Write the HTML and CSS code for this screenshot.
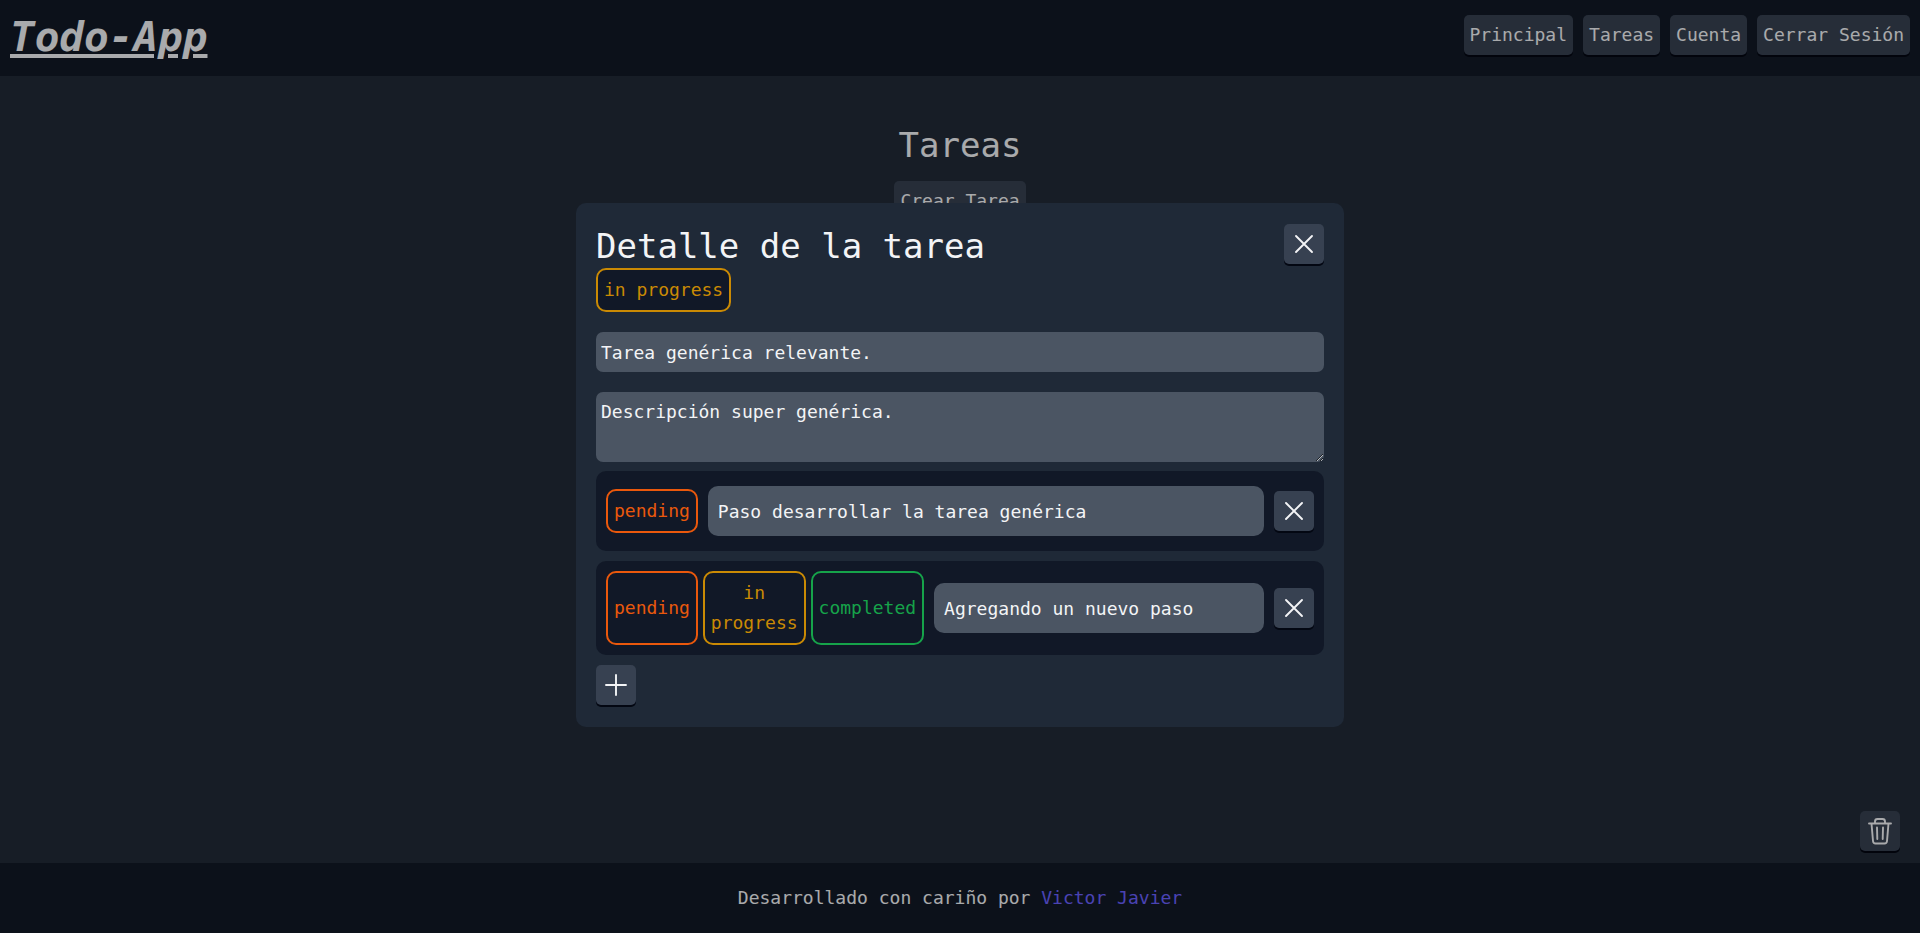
FILE: index.html
```html
<!DOCTYPE html>
<html lang="es">
<head>
  <meta charset="utf-8">
  <meta name="viewport" content="width=device-width, initial-scale=1">
  <title>Todo-App</title>
  <link rel="stylesheet" href="styles.css">
</head>
<body>
  <header class="header">
    <a class="logo" href="#">Todo-App</a>
    <nav class="nav">
      <a class="button" href="#">Principal</a>
      <a class="button" href="#">Tareas</a>
      <a class="button" href="#">Cuenta</a>
      <a class="button" href="#">Cerrar Sesión</a>
    </nav>
  </header>

  <main class="main">
    <h1 class="title">Tareas</h1>
    <button class="button" type="button">Crear Tarea</button>
    <button class="button icon-button trash" type="button" aria-label="Eliminar">
      <svg class="icon" viewBox="0 0 30 30" aria-hidden="true">
        <path d="M4 7.500H26M6.500 7.500L8 25Q8.200 27.500 10.500 27.500H19.500Q21.800 27.500 22 25L23.500 7.500M10 7V5.500Q10 3 12.500 3H17.500Q20 3 20 5.500V7M12 11.500L12.300 23M18 11.500L17.700 23"/>
      </svg>
    </button>
  </main>

  <footer class="footer">
    <p class="credit">Desarrollado con cariño por <a class="link" href="#">Victor Javier</a></p>
  </footer>

  <div class="overlay">
    <section class="modal" role="dialog" aria-modal="true" aria-labelledby="modal-title">
      <div class="modal-head">
        <h2 class="title" id="modal-title">Detalle de la tarea</h2>
        <button class="button icon-button" type="button" aria-label="Cerrar">
          <svg class="icon" viewBox="0 0 30 30" aria-hidden="true"><path d="M7 7L23 23M23 7L7 23"/></svg>
        </button>
      </div>
      <button class="badge badge-progress" type="button">in progress</button>
      <form class="form">
        <input class="field" type="text" aria-label="Título" value="Tarea genérica relevante.">
        <textarea class="field area" rows="2" aria-label="Descripción">Descripción super genérica.</textarea>
      </form>
      <ul class="steps">
        <li class="step">
          <div class="badges">
            <button class="badge badge-pending" type="button">pending</button>
          </div>
          <input class="field step-field" type="text" aria-label="Paso 1" value="Paso desarrollar la tarea genérica">
          <button class="button icon-button" type="button" aria-label="Eliminar paso 1">
            <svg class="icon" viewBox="0 0 30 30" aria-hidden="true"><path d="M7 7L23 23M23 7L7 23"/></svg>
          </button>
        </li>
        <li class="step">
          <div class="badges">
            <button class="badge badge-pending" type="button">pending</button>
            <button class="badge badge-progress" type="button">in progress</button>
            <button class="badge badge-completed" type="button">completed</button>
          </div>
          <input class="field step-field" type="text" aria-label="Paso 2" value="Agregando un nuevo paso">
          <button class="button icon-button" type="button" aria-label="Eliminar paso 2">
            <svg class="icon" viewBox="0 0 30 30" aria-hidden="true"><path d="M7 7L23 23M23 7L7 23"/></svg>
          </button>
        </li>
      </ul>
      <button class="button icon-button" type="button" aria-label="Agregar paso">
        <svg class="icon" viewBox="0 0 30 30" aria-hidden="true"><path d="M5 15H25M15 5V25"/></svg>
      </button>
    </section>
  </div>
</body>
</html>
```
FILE: styles.css
```css
* {
  box-sizing: border-box;
}

body {
  display: flex;
  flex-direction: column;
  min-height: 100vh;
  margin: 0;
  background: #212a37;
  color: #f3f4f6;
  font: 18px/30px "DejaVu Sans Mono", monospace;
}

button,
input,
textarea {
  margin: 0;
  border: 0;
  color: inherit;
  font: inherit;
}

.header {
  display: flex;
  justify-content: space-between;
  align-items: flex-start;
  padding: 12px 10px 14px;
  background: #121926;
}

.logo {
  color: inherit;
  font-size: 41px;
  font-style: italic;
  font-weight: bold;
  line-height: 50px;
  text-decoration: underline;
}

.nav {
  display: flex;
  gap: 10px;
  padding-top: 3px;
}

.button {
  padding: 5px 6px;
  border-radius: 5px;
  background: #374151;
  box-shadow: 0 2px 0 #030712;
  color: inherit;
  text-decoration: none;
}

.icon-button {
  flex: none;
  display: block;
  width: 40px;
  height: 40px;
  padding: 5px;
}

.icon {
  display: block;
  width: 30px;
  height: 30px;
  fill: none;
  stroke: currentColor;
  stroke-width: 1.9;
  stroke-linecap: round;
  stroke-linejoin: round;
}

.main {
  position: relative;
  flex: 1;
  display: flex;
  flex-direction: column;
  align-items: center;
  gap: 14px;
  padding-top: 47px;
}

.title {
  margin: 0;
  font-size: 34px;
  font-weight: normal;
  line-height: 44px;
}

.trash {
  position: absolute;
  right: 20px;
  bottom: 12px;
}

.footer {
  padding: 20px;
  background: #121926;
  text-align: center;
}

.credit {
  margin: 0;
}

.link {
  color: #6a60ff;
  text-decoration: none;
}

.overlay {
  position: fixed;
  inset: 0;
  display: flex;
  align-items: center;
  justify-content: center;
  padding-bottom: 3px;
  background: rgba(0, 0, 0, 0.3);
}

.modal {
  width: 40%;
  padding: 21px 20px 22px;
  border-radius: 10px;
  background: #1f2937;
}

.modal-head {
  display: flex;
  justify-content: space-between;
}

.badge {
  padding: 5px 6px;
  border: 2px solid;
  border-radius: 10px;
  background: #111827;
}

.badge-pending {
  color: #ea580c;
}

.badge-progress {
  color: #ca8a04;
}

.badge-completed {
  color: #16a34a;
}

.form {
  display: flex;
  flex-direction: column;
  gap: 20px;
  padding: 20px 0 9px;
}

.field {
  width: 100%;
  height: 40px;
  padding: 5px;
  border-radius: 7px;
  background: #4b5563;
}

.area {
  display: block;
  height: 70px;
  resize: vertical;
}

.steps {
  display: flex;
  flex-direction: column;
  gap: 10px;
  margin: 0 0 10px;
  padding: 0;
  list-style: none;
}

.step {
  display: flex;
  align-items: center;
  gap: 10px;
  min-height: 80px;
  padding: 10px;
  border-radius: 10px;
  background: #111827;
}

.badges {
  display: flex;
  gap: 5px;
}

.badges .badge {
  width: min-content;
}

.step-field {
  flex: 1;
  min-width: 0;
  height: 50px;
  padding: 10px;
  border-radius: 10px;
}
```
